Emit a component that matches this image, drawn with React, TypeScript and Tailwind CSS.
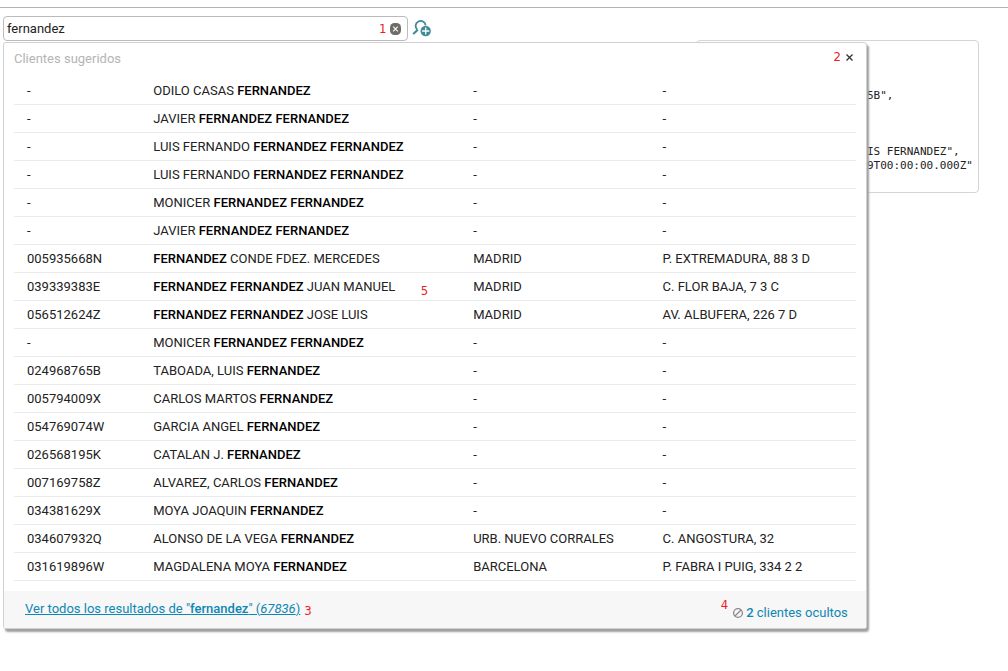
import { useState } from "react";
import type { ReactNode } from "react";

type Client = { id: string; name: string; city: string; address: string };

const clients: Client[] = [
  { id: "-", name: "ODILO CASAS FERNANDEZ", city: "-", address: "-" },
  { id: "-", name: "JAVIER FERNANDEZ FERNANDEZ", city: "-", address: "-" },
  { id: "-", name: "LUIS FERNANDO FERNANDEZ FERNANDEZ", city: "-", address: "-" },
  { id: "-", name: "LUIS FERNANDO FERNANDEZ FERNANDEZ", city: "-", address: "-" },
  { id: "-", name: "MONICER FERNANDEZ FERNANDEZ", city: "-", address: "-" },
  { id: "-", name: "JAVIER FERNANDEZ FERNANDEZ", city: "-", address: "-" },
  { id: "005935668N", name: "FERNANDEZ CONDE FDEZ. MERCEDES", city: "MADRID", address: "P. EXTREMADURA, 88 3 D" },
  { id: "039339383E", name: "FERNANDEZ FERNANDEZ JUAN MANUEL", city: "MADRID", address: "C. FLOR BAJA, 7 3 C" },
  { id: "056512624Z", name: "FERNANDEZ FERNANDEZ JOSE LUIS", city: "MADRID", address: "AV. ALBUFERA, 226 7 D" },
  { id: "-", name: "MONICER FERNANDEZ FERNANDEZ", city: "-", address: "-" },
  { id: "024968765B", name: "TABOADA, LUIS FERNANDEZ", city: "-", address: "-" },
  { id: "005794009X", name: "CARLOS MARTOS FERNANDEZ", city: "-", address: "-" },
  { id: "054769074W", name: "GARCIA ANGEL FERNANDEZ", city: "-", address: "-" },
  { id: "026568195K", name: "CATALAN J. FERNANDEZ", city: "-", address: "-" },
  { id: "007169758Z", name: "ALVAREZ, CARLOS FERNANDEZ", city: "-", address: "-" },
  { id: "034381629X", name: "MOYA JOAQUIN FERNANDEZ", city: "-", address: "-" },
  { id: "034607932Q", name: "ALONSO DE LA VEGA FERNANDEZ", city: "URB. NUEVO CORRALES", address: "C. ANGOSTURA, 32" },
  { id: "031619896W", name: "MAGDALENA MOYA FERNANDEZ", city: "BARCELONA", address: "P. FABRA I PUIG, 334 2 2" },
];

function Highlighted({ text }: { text: string }) {
  return (
    <>
      {text.split(/(FERNANDEZ(?: FERNANDEZ)*)/).map((part, i) =>
        part.startsWith("FERNANDEZ") ? (
          <strong key={i} className="font-medium text-black">{part}</strong>
        ) : (
          part
        ),
      )}
    </>
  );
}

function Note({ children, className = "" }: { children: ReactNode; className?: string }) {
  return (
    <span className={`font-['DejaVu_Sans_Condensed','DejaVu_Sans',sans-serif] text-[13px] leading-4 text-[#ed1c24] ${className}`}>
      {children}
    </span>
  );
}

function SearchPlusIcon() {
  return (
    <svg width="20" height="18" viewBox="0 0 20 18" fill="none" aria-hidden="true">
      <path d="M5.2 9.6A5 5 0 1 1 13.6 5.4" stroke="#3f8b98" strokeWidth="1.8" />
      <path d="M5.8 9.7L1.2 14" stroke="#3f8b98" strokeWidth="2.2" />
      <circle cx="13.7" cy="11" r="5.2" fill="#3f8b98" />
      <path d="M13.7 7.4v7.2M10.1 11h7.2" stroke="#fff" strokeWidth="1.3" />
    </svg>
  );
}

export default function App() {
  const [query, setQuery] = useState("fernandez");
  return (
    <div className="min-h-screen bg-white font-[Roboto,sans-serif] text-[13px] leading-4 text-[#222]">
      <header className="h-2 border-b border-[#b4b4b4]" />
      <main className="relative flex items-start justify-between pt-2 pr-[29px] pl-[3px]">
        <form role="search" className="flex w-[44%] items-center gap-1" onSubmit={(e) => e.preventDefault()}>
          <div className="flex h-[25px] flex-1 items-center gap-1 rounded border border-[#bbb] pr-1.5 pl-[3px]">
            <input
              aria-label="Buscar clientes"
              value={query}
              onChange={(e) => setQuery(e.target.value)}
              className="min-w-0 flex-1 bg-transparent outline-none"
            />
            <Note>1</Note>
            <button type="button" aria-label="Borrar" onClick={() => setQuery("")}>
              <svg width="11" height="12" viewBox="0 0 11 12" aria-hidden="true">
                <rect width="11" height="12" rx="4.5" fill="#6f6c67" />
                <path d="M3.2 3.7l4.6 4.6M7.8 3.7L3.2 8.3" stroke="#fff" strokeWidth="1.1" />
              </svg>
            </button>
          </div>
          <button type="submit" aria-label="Búsqueda avanzada">
            <SearchPlusIcon />
          </button>
        </form>

        <aside className="mt-6 w-[283px] rounded border border-[#d5d5d5] pt-12 pb-[19px]">
          <pre className="flex flex-col pl-[170px] font-['DejaVu_Sans_Mono',monospace] text-[11px] leading-[14px] text-[#222]">
            <span>5B",</span>
            <span className="pt-[42px]">IS FERNANDEZ",</span>
            <span>9T00:00:00.000Z"</span>
          </pre>
        </aside>

        <section
          aria-label="Clientes sugeridos"
          className="absolute top-[34px] left-[3px] w-[85.7%] rounded-[3px] border border-[#d0d0d0] bg-white shadow-[2px_3px_2px_#a0a0a0]"
        >
          <div className="flex items-start justify-between pt-1 pr-3 pl-2.5">
            <h2 className="pt-1 font-normal text-[#b5b5b5]">Clientes sugeridos</h2>
            <div className="flex items-center gap-1 pt-0.5">
              <Note>2</Note>
              <button type="button" aria-label="Cerrar">
                <svg width="9" height="9" viewBox="0 0 9 9" aria-hidden="true">
                  <path d="M1.5 1.5l6 6M7.5 1.5l-6 6" stroke="#333" strokeWidth="1.3" />
                </svg>
              </button>
            </div>
          </div>
          <div className="px-2.5 pt-[9px] pb-2.5">
            <table className="w-full table-fixed border-collapse text-left">
              <colgroup>
                <col className="w-[15%]" />
                <col className="w-[38%]" />
                <col className="w-[22.5%]" />
                <col />
              </colgroup>
              <tbody>
                {clients.map((c, i) => (
                  <tr key={i} className="h-7 border-b border-[#ebebeb]">
                    <td className="pt-0.5 pl-[13px]">{c.id}</td>
                    <td className="relative pt-0.5 pl-[13px]">
                      <Highlighted text={c.name} />
                      {i === 7 && <Note className="absolute top-2.5 right-8">5</Note>}
                    </td>
                    <td className="pt-0.5 pl-[13px]">{c.city}</td>
                    <td className="pt-0.5 pl-[13px]">{c.address}</td>
                  </tr>
                ))}
              </tbody>
            </table>
          </div>
          <footer className="flex h-[37px] items-center justify-between bg-[#f7f7f7] pr-[18px] pl-[21px]">
            <div className="flex items-start gap-1">
              <a href="#resultados" className="pt-0.5 text-[#0d87b5] underline">
                Ver todos los resultados de "<strong className="font-medium">fernandez</strong>" (<em>67836</em>)
              </a>
              <Note className="pt-1">3</Note>
            </div>
            <div className="flex items-start gap-1">
              <Note className="pb-2">4</Note>
              <a href="#ocultos" className="flex items-center gap-0.5 pt-2 text-[#0d87b5]">
                <svg width="12" height="12" viewBox="0 0 12 12" fill="none" stroke="#888" strokeWidth="1.3" aria-hidden="true">
                  <circle cx="6" cy="6" r="4.4" />
                  <path d="M3 9l6-6" />
                </svg>
                <span><strong className="font-medium">2</strong> clientes ocultos</span>
              </a>
            </div>
          </footer>
        </section>
      </main>
    </div>
  );
}
